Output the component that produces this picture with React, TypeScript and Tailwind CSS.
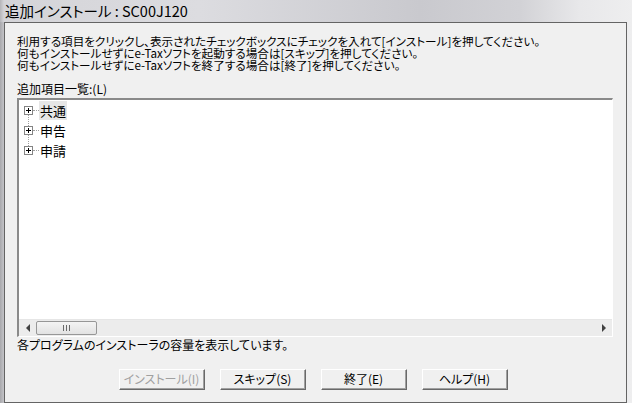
const font = "[font-family:'Noto_Sans_CJK_JP','Liberation_Sans',sans-serif] [font-feature-settings:'palt']";

function PlusBox() {
  return (
    <div className="relative w-[9px] h-[9px] border border-[#848484] bg-white shrink-0">
      <div className="absolute left-[1px] top-[3px] w-[5px] h-px bg-black" />
      <div className="absolute left-[3px] top-[1px] w-px h-[5px] bg-black" />
    </div>
  );
}

function TreeItem({ label, last, selected }: { label: string; last?: boolean; selected?: boolean }) {
  return (
    <div className="relative flex items-center h-[20px] pl-[5px]">
      {/* connector line down to next item */}
      {!last && <div className="absolute left-[9px] top-[15px] h-[15px] border-l border-dotted border-[#a0a0a0]" />}
      <PlusBox />
      <div className="w-[6px] border-t border-dotted border-[#a0a0a0]" />
      <div className={`h-[19px] flex items-center px-[1px] text-[13px] leading-none ${selected ? 'bg-[#e6e6e6]' : ''}`}>{label}</div>
    </div>
  );
}

function Button({ label, disabled }: { label: string; disabled?: boolean }) {
  return (
    <div className="w-[86px] h-[21px] border-t border-l border-t-white border-l-white border-r border-b border-r-[#696969] border-b-[#696969] bg-[#f0f0f0]">
      <div className={`w-full h-full flex items-center justify-center border-r border-b border-r-[#a0a0a0] border-b-[#a0a0a0] text-[12px] leading-none ${disabled ? 'text-[#a0a0a0]' : 'text-black'}`}>
        {label}
      </div>
    </div>
  );
}

export default function App() {
  return (
    <div className={`w-[632px] h-[403px] overflow-hidden bg-[linear-gradient(90deg,#b4b4b8_0px,#d4d4d8_4px,#dcdce0_200px,#c9c9ce_420px,#d2d2d6_520px,#e8e8ea_580px,#eeeeef_632px)] text-black ${font}`}>
      {/* Title bar */}
      <div className="h-[22px] flex items-center pl-[5px] text-[14.5px] leading-none text-black">
        追加インストール : SC00J120
      </div>

      <div className="flex">
        <div className="w-[4px] bg-[linear-gradient(90deg,#a8a8ac,#c4c4c8)]" />
        {/* Panel */}
        <div className="w-[623px] h-[381px] border border-[#646464] bg-[#f0f0f0] flex flex-col pl-[12px] pt-[12px] text-[11.6px] leading-[12px]">
          <div>利用する項目をクリックし、表示されたチェックボックスにチェックを入れて[インストール]を押してください。</div>
          <div>何もインストールせずにe-Taxソフトを起動する場合は[スキップ]を押してください。</div>
          <div>何もインストールせずにe-Taxソフトを終了する場合は[終了]を押してください。</div>

          <div className="mt-[12px] text-[12px]">追加項目一覧:(L)</div>

          {/* Tree view */}
          <div className="mt-[3px] w-[596px] h-[239px] border-t-2 border-l-2 border-t-[#8a8a8a] border-l-[#8a8a8a] border-r border-b border-r-white border-b-white bg-white flex flex-col">
            <div className="flex-1">
              <TreeItem label="共通" selected />
              <TreeItem label="申告" />
              <TreeItem label="申請" last />
            </div>
            {/* Horizontal scrollbar */}
            <div className="h-[17px] bg-[#ececec] border-t border-[#e6e6e6] flex items-center">
              <div className="w-[17px] h-full flex items-center justify-center">
                <div className="w-0 h-0 border-y-[4px] border-y-transparent border-r-[4px] border-r-[#404040]" />
              </div>
              <div className="w-[61px] h-[14px] rounded-[2px] border border-[#979797] bg-[linear-gradient(180deg,#f4f4f4,#e2e2e2)] flex items-center justify-center gap-[2px]">
                <div className="w-px h-[6px] bg-[#6a6a6a]" />
                <div className="w-px h-[6px] bg-[#6a6a6a]" />
                <div className="w-px h-[6px] bg-[#6a6a6a]" />
              </div>
              <div className="flex-1" />
              <div className="w-[17px] h-full flex items-center justify-center">
                <div className="w-0 h-0 border-y-[4px] border-y-transparent border-l-[4px] border-l-[#404040]" />
              </div>
            </div>
          </div>

          <div className="mt-[2px] text-[12px]">各プログラムのインストーラの容量を表示しています。</div>

          <div className="mt-[18px] ml-[102px] flex gap-[15px]">
            <Button label="インストール(I)" disabled />
            <Button label="スキップ(S)" />
            <Button label="終了(E)" />
            <Button label="ヘルプ(H)" />
          </div>
        </div>
        <div className="flex-1" />
      </div>
    </div>
  );
}
